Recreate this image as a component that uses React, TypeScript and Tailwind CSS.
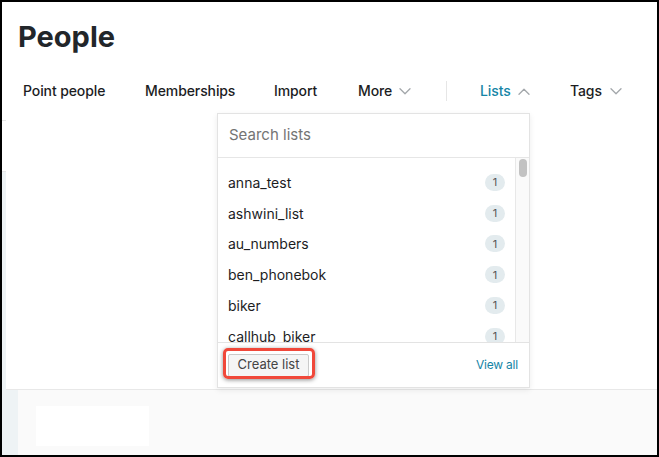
import { ReactNode } from 'react';

const Chevron = ({ up = false }: { up?: boolean }) => (
  <svg width="12" height="7" viewBox="0 0 12 7" fill="none" className="shrink-0">
    <path
      d={up ? 'M1 6.2L6 1.2l5 5' : 'M1 0.8l5 5 5-5'}
      stroke="#a3a7ab"
      strokeWidth="1.3"
      strokeLinecap="round"
      strokeLinejoin="round"
    />
  </svg>
);

const Tab = ({ children, className = '' }: { children: ReactNode; className?: string }) => (
  <div className={`flex items-center shrink-0 text-[14px] font-medium leading-5 tracking-[-0.1px] text-[#1c1d1f] whitespace-nowrap ${className}`}>
    {children}
  </div>
);

const lists = ['anna_test', 'ashwini_list', 'au_numbers', 'ben_phonebok', 'biker', 'callhub_biker', 'chris_list'];

export default function App() {
  return (
    <div
      className="relative flex w-[659px] h-[457px] overflow-hidden border-2 border-black bg-[#fafafa]"
      style={{ fontFamily: 'Inter, "Noto Sans", sans-serif' }}
    >
      {/* thin left gutter */}
      <div className="flex flex-col w-[4px] shrink-0">
        <div className="h-[119px] bg-white border-b border-[#e6e6e6]" />
        <div className="h-[51px] bg-white border-b border-[#e6e6e6]" />
        <div className="flex-1 bg-[#eef3f5]" />
      </div>

      <div className="flex flex-col flex-1">
        {/* ============= HEADER ============= */}
        <div className="h-[388px] bg-white border-b border-[#e8e8e8]">
          <h1 className="pl-[12px] pt-[17px] text-[29px] leading-[36px] font-bold text-[#22262a]">
            People
          </h1>

          <nav className="flex items-center pl-[17px] mt-[26px] h-5">
            <Tab className="w-[122px]">Point people</Tab>
            <Tab className="w-[129px]">Memberships</Tab>
            <Tab className="w-[84px]">Import</Tab>
            <Tab className="w-[88px] gap-[7px]">
              More <Chevron />
            </Tab>
            <div className="w-px h-[20px] bg-[#e6e6e6] shrink-0" />
            <Tab className="ml-[33px] w-[90px] gap-[7px] text-[#1585a6]">
              Lists <Chevron up />
            </Tab>
            <Tab className="gap-[8px]">
              Tags <Chevron />
            </Tab>
          </nav>
        </div>

        {/* ============= PAGE BODY ============= */}
        <div className="flex flex-1">
          <div className="w-[12px] bg-[#eef3f5]" />
          <div className="flex-1">
            <div className="ml-[18px] mt-[16px] w-[113px] h-[40px] bg-white" />
          </div>
        </div>
      </div>

      {/* ============= LISTS DROPDOWN ============= */}
      <div className="absolute left-[215px] top-[111px] w-[313px] h-[275px] flex flex-col bg-white border border-[#e3e3e3] shadow-[0_2px_6px_rgba(0,0,0,0.08)]">
        <div className="h-[44px] shrink-0 flex items-center pl-[11px] border-b border-[#e6e6e6] text-[15px] text-[#747474]">
          Search lists
        </div>

        <div className="flex flex-1 min-h-0">
          <div className="flex-1 overflow-hidden pt-[9px]">
            {lists.map((name) => (
              <div key={name} className="h-[30.8px] flex items-center justify-between pl-[10px] pr-[10px]">
                <span className="text-[14px] text-[#1c1d1f]">{name}</span>
                <span className="w-[20px] h-[17px] rounded-full bg-[#e3ebee] flex items-center justify-center text-[11px] text-[#555]">
                  1
                </span>
              </div>
            ))}
          </div>
          <div className="w-[14px] shrink-0 border-l border-[#e8e8e8] bg-[#fafafa] pt-[1px] flex justify-center">
            <div className="w-[8px] h-[18px] rounded-full bg-[#c2c2c2]" />
          </div>
        </div>

        <div className="relative h-[45px] shrink-0 border-t border-[#e3e3e3] flex items-center justify-between pl-[10px] pr-[11px]">
          <button className="h-[23px] w-[81px] bg-[#f5f5f5] border border-[#cacaca] text-[13px] text-[#444] rounded-[2px]">
            Create list
          </button>
          <span className="text-[12px] text-[#1585a6] tracking-[-0.2px]">View all</span>
          <div className="absolute left-[5px] top-[5px] w-[92px] h-[31px] rounded-[5px] border-[3px] border-[#f0483a] shadow-[0_1px_4px_rgba(0,0,0,0.45)]" />
        </div>
      </div>
    </div>
  );
}
